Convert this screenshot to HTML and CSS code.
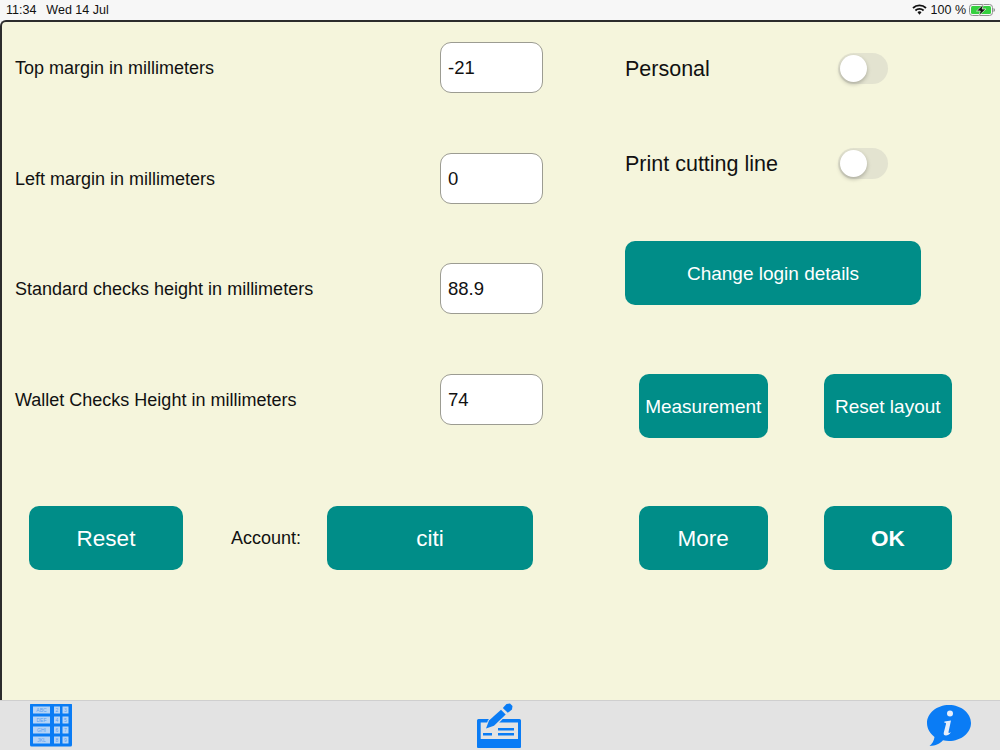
FILE: index.html
```html
<!DOCTYPE html>
<html lang="en">
<head>
<meta charset="utf-8">
<title>Settings</title>
<link rel="stylesheet" href="styles.css">
</head>
<body>
<div class="status">
  <div class="status-left"><span>11:34</span><span>Wed 14 Jul</span></div>
  <div class="status-right">
    <svg class="wifi" width="15" height="11" viewBox="0 0 15 11"><g fill="none" stroke="#111" stroke-width="1.800"><path d="M1 4a9.500 9.500 0 0 1 13 0"/><path d="M3.400 6.500a6 6 0 0 1 8.200 0"/></g><path d="M7.500 7.300a2.500 2.500 0 0 1 2 .9l-2 2.500-2-2.500a2.500 2.500 0 0 1 2-.9z" fill="#111"/></svg>
    <span>100 %</span>
    <svg class="battery" width="26" height="12" viewBox="0 0 26 12"><rect x=".5" y=".5" width="23" height="11" rx="3" fill="none" stroke="#8f8f8f"/><rect x="2" y="2" width="20" height="8" rx="1.500" fill="#35d03f"/><path d="M24.500 4v4c.8-.3 1.500-1 1.500-2s-.7-1.700-1.500-2z" fill="#8f8f8f"/><path d="M14.500 .3 7.500 7h3.800l-1.500 4.700L17 5h-3.800z" fill="#111" stroke="#f0f5e8" stroke-width=".7"/></svg>
  </div>
</div>

<main class="panel">
  <div class="top">
    <section class="fields">
      <div class="field"><label class="label">Top margin in millimeters</label><input class="input" value="-21"></div>
      <div class="field"><label class="label">Left margin in millimeters</label><input class="input" value="0"></div>
      <div class="field"><label class="label">Standard checks height in millimeters</label><input class="input" value="88.9"></div>
      <div class="field"><label class="label">Wallet Checks Height in millimeters</label><input class="input" value="74"></div>
    </section>
    <section class="options">
      <div class="switch-row first"><span class="switch-label">Personal</span><span class="switch"><span class="knob"></span></span></div>
      <div class="switch-row second"><span class="switch-label">Print cutting line</span><span class="switch"><span class="knob"></span></span></div>
      <button class="btn btn-wide">Change login details</button>
      <div class="pair pair-upper">
        <button class="btn btn-small">Measurement</button>
        <button class="btn btn-small">Reset layout</button>
      </div>
    </section>
  </div>
  <div class="bottom">
    <button class="btn btn-reset btn-large">Reset</button>
    <span class="account">Account:</span>
    <button class="btn btn-citi btn-large">citi</button>
    <div class="pair pair-lower">
      <button class="btn btn-small btn-large">More</button>
      <button class="btn btn-small btn-large btn-ok">OK</button>
    </div>
  </div>
</main>

<nav class="tabs">
  <svg class="tab-icon" width="44" height="44" viewBox="0 1.500 44 44">
    <rect x="1" y="1" width="42" height="43" rx="1.500" fill="#0a7cf5"/>
    <g fill="#b5d3f6">
      <rect x="4" y="4" width="17" height="7"/><rect x="25" y="4" width="6" height="7"/><rect x="33.500" y="4" width="6" height="7"/>
      <rect x="4" y="14" width="17" height="7"/><rect x="25" y="14" width="6" height="7"/><rect x="33.500" y="14" width="6" height="7"/>
      <rect x="4" y="24" width="17" height="7"/><rect x="25" y="24" width="6" height="7"/><rect x="33.500" y="24" width="6" height="7"/>
      <rect x="4" y="34" width="17" height="7"/><rect x="25" y="34" width="6" height="7"/><rect x="33.500" y="34" width="6" height="7"/>
    </g>
    <g class="key-text" text-anchor="middle">
      <text x="12.500" y="9.800">ABC</text><text x="28" y="9.800">2</text><text x="36.500" y="9.800">3</text>
      <text x="12.500" y="19.800">DEF</text><text x="28" y="19.800">4</text><text x="36.500" y="19.800">5</text>
      <text x="12.500" y="29.800">GHI</text><text x="28" y="29.800">6</text><text x="36.500" y="29.800">7</text>
      <text x="12.500" y="39.800">JKL</text><text x="28" y="39.800">8</text><text x="36.500" y="39.800">9</text>
    </g>
  </svg>
  <svg class="tab-icon" width="46" height="46" viewBox="0 0 46 46">
    <path d="M1.500 16h41a1.500 1.500 0 0 1 1.500 1.500V44a1 1 0 0 1-1 1H1a1 1 0 0 1-1-1V17.500A1.500 1.500 0 0 1 1.500 16z" fill="#0a7cf5"/>
    <rect x="3.700" y="19.500" width="37.300" height="16.500" fill="#e3e3e3"/>
    <path d="M6 30h9v2.500H6zM21 25h16v2.500H21zM21 30h16v2.500H21z" fill="#0a7cf5"/>
    <path d="M8 27 11 17 24 5.500 30 11.500 18 24z" fill="#e3e3e3"/>
    <path d="M9 25.500 12 17.500 24 6.800 28.700 11.500 17 22.800z" fill="#0a7cf5"/>
    <path d="M25.800 5 29.500 1 33 .6 35.500 3 35 6.500 30.800 9.800z" fill="#0a7cf5"/>
  </svg>
  <svg class="tab-icon" width="46" height="44" viewBox="0 0 46 44">
    <path d="M23 1c12 0 22 8 22 18S35 37 23 37c-2 0-4-.2-6-.7C14 39.500 10 42 3.500 42c2.500-2 4.500-5 5-9C4 29.500 1 24.500 1 19 1 9 11 1 23 1z" fill="#0a7cf5"/>
    <circle cx="24" cy="9.500" r="3" fill="#e6eefb"/>
    <path d="M18.500 17.500 25 16.500 22.500 28c-.2 1.200.8 1.200 2.500 0-1.500 2.600-3.500 3.500-5 3.500-2 0-2.600-1.300-2.200-3L20 20c.2-1-.3-1.300-1.700-1.300z" fill="#e6eefb"/>
  </svg>
</nav>
</body>
</html>
```
FILE: styles.css
```css
* { box-sizing: border-box; }
html, body { margin: 0; height: 750px; overflow: hidden; }
body {
  display: flex;
  flex-direction: column;
  width: 1000px;
  background: #f8f8f8;
  font-family: "Liberation Sans", Arial, sans-serif;
  color: #111;
}
.status {
  height: 20px;
  flex: none;
  display: flex;
  justify-content: space-between;
  align-items: center;
  padding: 0 5px 1px 6px;
  font-size: 12.500px;
  background: #f7f7f7;
}
.status-left { display: flex; gap: 10px; }
.status-right { display: flex; align-items: center; gap: 3px; }
.wifi { margin-right: 1px; }
.panel {
  height: 680px;
  flex: none;
  background: #f5f5dc;
  border-top: 2px solid #2c2c2c;
  border-left: 2px solid #2c2c2c;
  border-top-left-radius: 6px;
  padding: 20px 0 0 13px;
}
.top { display: flex; height: 464px; }
.fields {
  width: 610px;
  display: grid;
  grid-auto-rows: 110.500px;
}
.field {
  display: flex;
  align-items: flex-start;
  justify-content: space-between;
  padding-right: 82px;
}
.label { font-size: 18px; line-height: 53px; }
.input {
  width: 103px;
  height: 51px;
  border: 1.500px solid #9c9c92;
  border-radius: 11px;
  background: #fff;
  padding: 1px 7px 0;
  font: 18.500px "Liberation Sans", Arial, sans-serif;
  color: #111;
  outline: none;
}
.options { width: 360px; }
.switch-row {
  display: flex;
  align-items: center;
  justify-content: space-between;
  width: 263px;
  height: 31px;
}
.first { margin-top: 11px; }
.second { margin-top: 64px; }
.switch-label { font-size: 21.500px; padding-top: 2px; }
.switch {
  width: 50px;
  height: 31px;
  border-radius: 16px;
  background: #e3e3d0;
  padding: 2px;
  display: flex;
}
.knob {
  width: 27px;
  height: 27px;
  border-radius: 50%;
  background: #fff;
  box-shadow: 0 2px 4px rgba(0, 0, 0, .25);
}
.btn {
  border: 0;
  border-radius: 10px;
  background: #008d88;
  color: #fff;
  font: 19px "Liberation Sans", Arial, sans-serif;
  height: 64px;
  padding: 1px 0 0;
}
.btn-wide { display: block; width: 296px; margin-top: 62px; }
.pair { display: flex; gap: 56px; }
.pair-upper { margin: 69px 0 0 14px; }
.btn-small { width: 128.500px; }
.bottom { display: flex; align-items: center; }
.btn-large { font-size: 22.500px; padding-top: 2px; }
.btn-reset { width: 154px; margin-left: 14px; }
.account { font-size: 18px; margin-left: 48px; width: 96px; }
.btn-citi { width: 206px; }
.pair-lower { margin-left: 106px; }
.btn-ok { font-weight: 700; }
.key-text { font: 5px "Liberation Sans", Arial, sans-serif; fill: #5aa0ee; }
.tabs {
  height: 50px;
  flex: none;
  background: #e3e3e3;
  border-top: 1px solid #cfcfcf;
  display: flex;
  justify-content: space-between;
  align-items: center;
  padding: 0 28px 0 29px;
}
```
